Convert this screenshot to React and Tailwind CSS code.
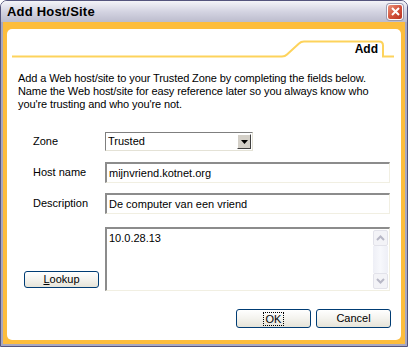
import React from "react";

function XpButton({ children, className = "" }) {
  return (
    <button
      type="button"
      className={`flex items-center justify-center rounded-[3px] border border-[#003c74] bg-gradient-to-b from-[#ffffff] via-[#f4f3ee] to-[#e6e4d8] text-[11px] leading-none text-black ${className}`}
    >
      {children}
    </button>
  );
}

function Chevron({ up }) {
  return (
    <svg width="9" height="6" viewBox="0 0 9 6">
      <path
        d={up ? "M1 5 L4.5 1.5 L8 5" : "M1 1 L4.5 4.5 L8 1"}
        fill="none"
        stroke="#b7b7c6"
        strokeWidth="2"
      />
    </svg>
  );
}

function Field({ value }) {
  return (
    <div className="flex h-[21px] flex-1 items-center border-t-2 border-l-2 border-b border-r border-t-[#8c8c8c] border-l-[#8c8c8c] border-b-[#f1efe2] border-r-[#f1efe2] bg-white pl-[2px]">
      {value}
    </div>
  );
}

export default function App() {
  return (
    <div className="h-[347px] w-[408px] bg-white font-['Liberation_Sans',Arial,sans-serif] text-[11px] text-black">
      <div className="flex h-full flex-col overflow-hidden rounded-t-[7px] border border-[#55557d]">
        {/* title bar */}
        <div className="flex h-[21px] shrink-0 items-center justify-between bg-gradient-to-b from-[#f4f4f8] via-[#d4d4e2] to-[#bcbccd] pl-[6px] pr-[4px]">
          <span className="text-[13px] font-bold leading-none tracking-[0.2px]">Add Host/Site</span>
          <div className="flex h-[16px] w-[16px] items-center justify-center rounded-[3px] border border-white bg-gradient-to-br from-[#e9937c] via-[#d3533c] to-[#b8321f] shadow-[0_0_0_1px_#9a9ab0]">
            <svg width="9" height="9" viewBox="0 0 9 9">
              <path d="M1 1 L8 8 M8 1 L1 8" stroke="#fff" strokeWidth="2" />
            </svg>
          </div>
        </div>

        {/* body */}
        <div className="flex flex-1 flex-col border-x-2 border-b-2 border-[#a8a8c2] bg-[#fdbd3c] pt-[7px] pb-[4px] pl-[4px] pr-[4px]">
          <div className="flex flex-1 flex-col rounded-[5px] bg-white">
            <div className="relative h-[43px] shrink-0">
              <svg className="absolute inset-0" width="392" height="43" viewBox="0 0 392 43">
                <path
                  d="M5 27.5 H275 Q278 27.5 280 25.5 L292 14.5 Q294 12.5 297 12.5 H372 Q376 12.5 376 16.5 V27.5 H387"
                  fill="none"
                  stroke="#fdd35c"
                  strokeWidth="2"
                />
              </svg>
              <span className="absolute right-[23px] top-[14px] text-[12px] font-bold leading-[13px]">Add</span>
            </div>

            <p className="px-[11px] text-[11px] leading-[13px] tracking-[-0.1px]">
              Add a Web host/site to your Trusted Zone by completing the fields below.
              Name the Web host/site for easy reference later so you always know who
              you're trusting and who you're not.
            </p>

            <div className="flex flex-col pl-[17px] pr-[11px] text-[11px]">
              <div className="mt-[21px] flex items-center">
                <span className="w-[81px] pl-[9px]">Zone</span>
                <div className="flex h-[19px] w-[148px] items-center justify-between border-t border-l border-b border-r border-t-[#7f7f7f] border-l-[#7f7f7f] border-b-[#e4e2d6] border-r-[#e4e2d6] bg-white pl-[2px] pr-[1px]">
                  <span>Trusted</span>
                  <div className="flex h-[15px] w-[14px] items-center justify-center border border-t-white border-l-white border-b-[#404040] border-r-[#404040] bg-[#d4d0c8]">
                    <svg width="7" height="4" viewBox="0 0 7 4">
                      <path d="M0 0 H7 L3.5 4 Z" fill="#000" />
                    </svg>
                  </div>
                </div>
              </div>

              <div className="mt-[11px] flex items-center">
                <span className="w-[81px] pl-[9px]">Host name</span>
                <Field value="mijnvriend.kotnet.org" />
              </div>

              <div className="mt-[10px] flex items-center">
                <span className="w-[81px] pl-[9px]">Description</span>
                <Field value="De computer van een vriend" />
              </div>

              <div className="mt-[13px] flex items-end">
                <div className="w-[81px]">
                  <XpButton className="mb-[3px] h-[17px] w-[75px]">
                    <span>
                      <span className="underline">L</span>ookup
                    </span>
                  </XpButton>
                </div>
                <div className="flex h-[64px] flex-1 border-t-2 border-l-2 border-b border-r border-t-[#8c8c8c] border-l-[#8c8c8c] border-b-[#f1efe2] border-r-[#f1efe2] bg-white">
                  <div className="flex-1 pl-[2px] pt-[1px]">10.0.28.13</div>
                  <div className="my-[1px] mr-[1px] flex w-[15px] flex-col">
                    <div className="flex h-[16px] items-center justify-center rounded-[2px] border border-[#e2e2ea] bg-[#f3f3f7]">
                      <Chevron up />
                    </div>
                    <div className="flex-1 bg-gradient-to-r from-[#eeeff6] via-[#f7f8fc] to-[#eeeff6]" />
                    <div className="flex h-[16px] items-center justify-center rounded-[2px] border border-[#e2e2ea] bg-[#f3f3f7]">
                      <Chevron />
                    </div>
                  </div>
                </div>
              </div>
            </div>

            <div className="mt-[18px] flex justify-end gap-[5px] pr-[10px]">
              <XpButton className="h-[19px] w-[75px]">
                <span className="border border-dotted border-black px-[2px] leading-[12px]">OK</span>
              </XpButton>
              <XpButton className="h-[19px] w-[75px]">Cancel</XpButton>
            </div>
          </div>
        </div>
      </div>
    </div>
  );
}
